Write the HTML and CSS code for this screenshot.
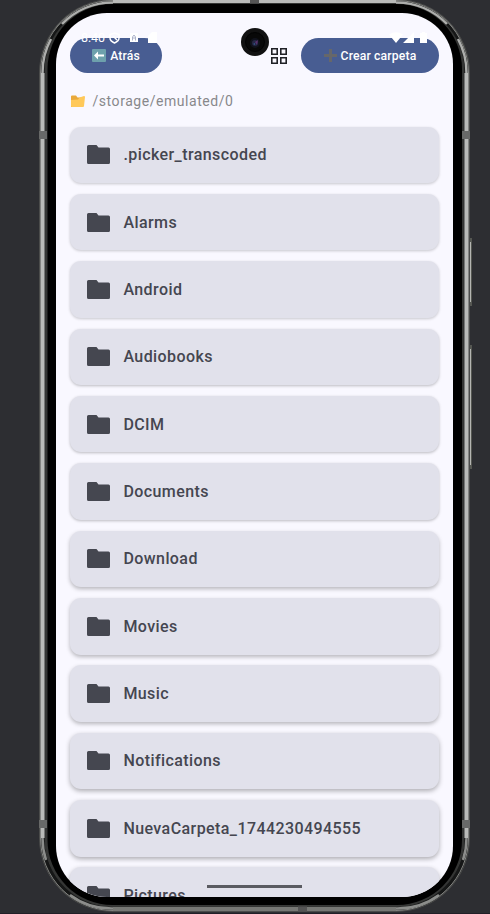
FILE: index.html
```html
<!DOCTYPE html>
<html lang="es">
<head>
<meta charset="utf-8">
<title>Archivos</title>
<link rel="stylesheet" href="styles.css">
</head>
<body>
<svg class="frame" viewBox="0 0 490 914" width="490" height="914" fill="none">
  <path d="M470 239h1v66h-1M470 346h1v122h-1" stroke="#555752" stroke-width="2"/>
  <path d="M470.500 242v60M470.500 349v116" stroke="#b5b6b2"/>
  <rect x="39" y="-1" width="431" height="913" rx="74" fill="#4b4c4b"/>
  <rect x="40.500" y="0" width="428" height="910.500" rx="72" fill="#b9bab8"/>
  <path d="M110 909H400" stroke="#777875" stroke-width="4"/>
  <g stroke="#161717" stroke-width="5">
    <path d="M42.500 73A70.500 70.500 0 0 1 113 2.500M466.500 73A70.500 70.500 0 0 0 396 2.500"/>
    <path d="M42.500 838A70.500 70.500 0 0 0 113 908.500M466.500 838A70.500 70.500 0 0 1 396 908.500"/>
  </g>
  <rect x="44.500" y="3" width="420" height="904" rx="68" fill="#343534"/>
  <rect x="47.500" y="4" width="414.500" height="901" rx="65" fill="#000"/>
  <path d="M108 905.500H402" stroke="#383938"/>
  <g stroke="#858684" stroke-width="1">
    <path d="M40.500 73A72.500 72.500 0 0 1 113 .500M468.500 73A72.500 72.500 0 0 0 396 .500"/>
    <path d="M40.500 838A72.500 72.500 0 0 0 113 910.500M468.500 838A72.500 72.500 0 0 1 396 910.500"/>
  </g>
  <g stroke="#adaeac" stroke-width="2.500">
    <path d="M42.500 73A70.500 70.500 0 0 1 51 39M62 24A70.500 70.500 0 0 1 113 2.500"/>
    <path d="M466.500 73A70.500 70.500 0 0 0 458 39M447 24A70.500 70.500 0 0 0 396 2.500"/>
  </g>
  <g stroke="#8c8d8b" stroke-width="2.500">
    <path d="M42.500 838A70.500 70.500 0 0 0 46 860M466.500 838A70.500 70.500 0 0 1 463 860"/>
    <path d="M70 895A70.500 70.500 0 0 0 113 908.500M439 895A70.500 70.500 0 0 1 396 908.500"/>
  </g>
  <path d="M39 135h8M462 135h8M39 824h8M462 824h8" stroke="#686968" stroke-width="8"/>
  <path d="M250 1h9M298 909h9" stroke="#555" stroke-width="5"/>
  <path d="M0 913.500H490" stroke="#211f27"/>
</svg>
<svg class="defs" width="0" height="0">
  <symbol id="folder" viewBox="0 0 23 19"><path d="M1.500 0H9.500l2 2.500H21.500A1.500 1.500 0 0 1 23 4v13.500a1.500 1.500 0 0 1-1.500 1.500h-20A1.500 1.500 0 0 1 0 17.500v-16A1.500 1.500 0 0 1 1.500 0Z" fill="#454750"/></symbol>
</svg>
<main class="screen">
  <div class="status">
    <span class="clock">8:40</span>
    <svg class="left-icons" width="50" height="12" viewBox="0 0 50 12">
      <path d="M5.500 1 10 2.500V6q0 3-4.500 5Q1 9 1 6V2.500Z" fill="none" stroke="#fff" stroke-width="1.500"/><path d="M4 4l4 4" stroke="#fff" stroke-width="1.500"/>
      <path d="M21 1h8v9h-8Z" fill="#fff"/><path d="M23.500 8.500V5L25 3l1.500 2v3.500M24 6h2" stroke="#aeb4cb" fill="none"/>
      <path d="M43 0h5v11h-9V4Z" fill="#fff"/>
    </svg>
    <svg class="right-icons" width="40" height="12" viewBox="0 0 40 12" fill="#fff"><path d="M0 2.500Q7-2 14 2.500L7 11ZM14 11 25 0V11ZM31 1h2V0h3v1h2v10h-7Z"/></svg>
  </div>
  <svg class="camera" width="28" height="28" viewBox="0 0 28 28"><circle cx="14" cy="14" r="14" fill="#111"/><circle cx="14" cy="14" r="9.500" fill="#080808" stroke="#030303"/><circle cx="14" cy="15" r="5" fill="#10121c"/><circle cx="14" cy="15" r="3" fill="#252744"/><path d="m14 14 3-2-1 5Z" fill="#59316e"/><path d="m12 16 2-1v2Z" fill="#34598c"/></svg>
  <header class="toolbar">
    <button class="button back"><svg width="14" height="13" viewBox="0 0 14 13"><rect width="14" height="13" rx="1" fill="#6da0ac"/><path d="M2 6.500 6 2.500v3h6v2H6v3Z" fill="#fff"/></svg><span>Atrás</span></button>
    <svg class="grid" width="16" height="16" viewBox="0 0 16 16" fill="none" stroke="#202126" stroke-width="1.600"><path d="M.8.800h5.400v5.400H.8ZM9.800.800h5.400v5.400H9.800ZM.8 9.800h5.400v5.400H.8ZM9.800 9.800h5.400v5.400H9.800Z"/></svg>
    <button class="button create"><svg width="13" height="13" viewBox="0 0 13 13"><path d="M6.500 0v13M0 6.500h13" stroke="#66676a" stroke-width="3"/></svg><span>Crear carpeta</span></button>
  </header>
  <div class="path"><svg width="16" height="13" viewBox="0 0 16 13"><path d="M1 1.500q0-1 1-1h4l1.500 2H11V12H1Z" fill="#e9a93b"/><path d="M1 5l7-.500L9.500 2.500 14 1q1 0 1 1l-1 9q0 1-1 1H2q-1 0-1-1Z" fill="#ffc95a"/></svg><span>/storage/emulated/0</span></div>
  <section class="list">
    <div class="card s1"><svg><use href="#folder"/></svg><span>.picker_transcoded</span></div>
    <div class="card s1"><svg><use href="#folder"/></svg><span>Alarms</span></div>
    <div class="card s1"><svg><use href="#folder"/></svg><span>Android</span></div>
    <div class="card s2"><svg><use href="#folder"/></svg><span>Audiobooks</span></div>
    <div class="card s2"><svg><use href="#folder"/></svg><span>DCIM</span></div>
    <div class="card s2"><svg><use href="#folder"/></svg><span>Documents</span></div>
    <div class="card s3"><svg><use href="#folder"/></svg><span>Download</span></div>
    <div class="card s3"><svg><use href="#folder"/></svg><span>Movies</span></div>
    <div class="card s3"><svg><use href="#folder"/></svg><span>Music</span></div>
    <div class="card s4"><svg><use href="#folder"/></svg><span>Notifications</span></div>
    <div class="card s4"><svg><use href="#folder"/></svg><span>NuevaCarpeta_1744230494555</span></div>
    <div class="card s4"><svg><use href="#folder"/></svg><span>Pictures</span></div>
  </section>
  <div class="home"></div>
</main>
</body>
</html>
```
FILE: styles.css
```css
* { box-sizing: border-box; }
body {
  margin: 0;
  height: 914px;
  padding: 13px 37px 17px 56px;
  overflow: hidden;
  background: #2d2e32;
  font-family: Roboto, sans-serif;
}
.frame { position: absolute; left: 0; top: 0; }
.defs { position: absolute; }
.screen {
  position: relative;
  height: 884px;
  padding: 25px 14px 0;
  overflow: hidden;
  border-radius: 51px;
  background: #f9f8ff;
}
.toolbar { display: flex; align-items: center; height: 35px; }
.button {
  display: flex;
  align-items: center;
  justify-content: center;
  gap: 4px;
  height: 35px;
  padding: 0;
  border: 0;
  border-radius: 18px;
  background: #485d92;
  color: #fff;
  font: 500 12.200px Roboto, sans-serif;
  letter-spacing: .15px;
}
.button svg { flex: none; }
.back { width: 92px; }
.create { width: 138px; margin-left: 14px; }
.grid { margin-left: auto; }
.path {
  display: flex;
  align-items: center;
  gap: 6.500px;
  height: 20px;
  margin-top: 18px;
  color: #88888b;
  font-size: 14px;
  letter-spacing: .55px;
}
.list { display: flex; flex-direction: column; gap: 10.870px; margin-top: 15.500px; }
.card {
  display: flex;
  flex: none;
  align-items: center;
  gap: 13.400px;
  height: 56.500px;
  padding-left: 17px;
  border-radius: 11px;
  background: #e1e1eb;
  color: #454650;
  font-size: 16px;
  font-weight: 500;
  letter-spacing: .42px;
}
.card svg { width: 23px; height: 19px; }
.s1 { box-shadow: 0 1px 3px #0003; }
.s2 { box-shadow: 0 1px 3px #00000040; }
.s3 { box-shadow: 0 2px 4px #00000045; }
.s4 { box-shadow: 0 2px 5px #00000050; }
.status {
  position: absolute;
  z-index: 2;
  top: 18px;
  left: 25px;
  right: 24px;
  height: 14px;
  display: flex;
  align-items: center;
  color: #fff;
}
.clock { width: 24px; font-size: 12.500px; line-height: 14px; }
.left-icons { margin-left: 4px; }
.right-icons { margin-left: auto; }
.camera { position: absolute; z-index: 3; left: 185px; top: 15px; }
.home {
  position: absolute;
  left: 151px;
  bottom: 9px;
  width: 95px;
  height: 3px;
  background: #5a5b61;
}
```
